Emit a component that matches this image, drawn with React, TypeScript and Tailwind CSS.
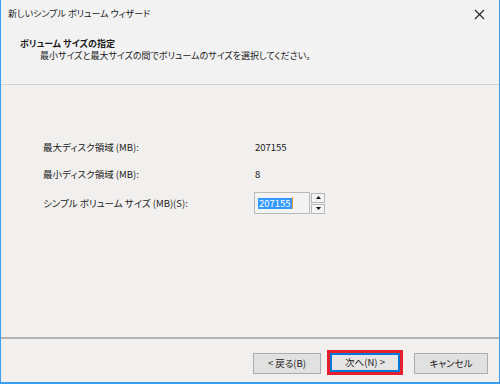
import React from 'react'

const jp = "font-['Meiryo_UI','Noto_Sans_CJK_JP',sans-serif] [font-feature-settings:'palt']"

function Row({ label, children }: { label: string; children: React.ReactNode }) {
  return (
    <div className="flex items-center h-[24px]">
      <div className="w-[212px]">{label}</div>
      <div>{children}</div>
    </div>
  )
}

function Btn({ children, primary, w }: { children: React.ReactNode; primary?: boolean; w: string }) {
  if (primary) {
    return (
      <div className="border-[3px] border-[#e3202c]">
        <div className="w-[70px] h-[19px] flex items-center justify-center bg-[#e5e5e5] border-2 border-[#0078d7]">
          {children}
        </div>
      </div>
    )
  }
  return (
    <div className={`${w} h-[21px] flex items-center justify-center bg-[#e1e1e1] border border-[#adadad]`}>
      {children}
    </div>
  )
}

export default function App() {
  return (
    <div className={`w-[500px] h-[384px] flex flex-col border-l border-r border-b-2 border-[#3a9ff0] text-[9px] text-[#1a1a1a] ${jp}`}>
      {/* title bar */}
      <div className="h-[28px] flex items-center justify-between pl-[7px] pr-[14px] bg-[#f2f2f2] text-[9px]">
        <span>新しいシンプル ボリューム ウィザード</span>
        <svg width="11" height="11" viewBox="0 0 11 11">
          <path d="M1 1 L10 10 M10 1 L1 10" stroke="#222" strokeWidth="1.1" />
        </svg>
      </div>

      {/* header */}
      <div className="h-[57px] bg-[#f2f2f2] border-b border-[#d4d4d4] pl-[19px] pt-[10px]">
        <div className="font-bold leading-[12px]">ボリューム サイズの指定</div>
        <div className="pl-[20px] leading-[12px]">最小サイズと最大サイズの間でボリュームのサイズを選択してください。</div>
      </div>

      {/* body */}
      <div className="flex-1 bg-[#f1f0ee] pl-[42px] pt-[50px] flex flex-col gap-[3px] text-[9.5px]">
        <Row label="最大ディスク領域 (MB):">207155</Row>
        <Row label="最小ディスク領域 (MB):">8</Row>
        <div className="flex items-center h-[26px] mt-[1px]">
          <div className="w-[211px]">シンプル ボリューム サイズ (MB)(S):</div>
          <div className="flex items-center">
            <div className="w-[56px] h-[22px] border border-[#b9b9b9] bg-[#f3f3f3] flex items-center pl-[3px]">
              <span className="bg-[#3399ff] text-white leading-[11px] px-[1px]">207155</span>
              <span className="w-px h-[12px] bg-[#f29b2c]" />
            </div>
            <div className="flex flex-col ml-[1px] gap-[1px]">
              <div className="w-[14px] h-[10px] border border-[#b9b9b9] bg-[#f3f3f3] flex items-center justify-center">
                <svg width="5" height="3" viewBox="0 0 5 3"><path d="M2.5 0 L5 3 L0 3 Z" fill="#111" /></svg>
              </div>
              <div className="w-[14px] h-[10px] border border-[#b9b9b9] bg-[#f3f3f3] flex items-center justify-center">
                <svg width="5" height="3" viewBox="0 0 5 3"><path d="M0 0 L5 0 L2.5 3 Z" fill="#111" /></svg>
              </div>
            </div>
          </div>
        </div>
      </div>

      {/* footer */}
      <div className="h-[45px] bg-[#f1f0ee] border-t-2 border-[#b4b4b4] flex items-start justify-end pr-[11px] pt-[11px] text-[9.5px]">
        <div className="mt-[3px]"><Btn w="w-[68px]">&lt; 戻る(B)</Btn></div>
        <div className="ml-[6px]"><Btn primary w="">次へ(N) &gt;</Btn></div>
        <div className="mt-[3px] ml-[11px]"><Btn w="w-[74px]">キャンセル</Btn></div>
      </div>
    </div>
  )
}
